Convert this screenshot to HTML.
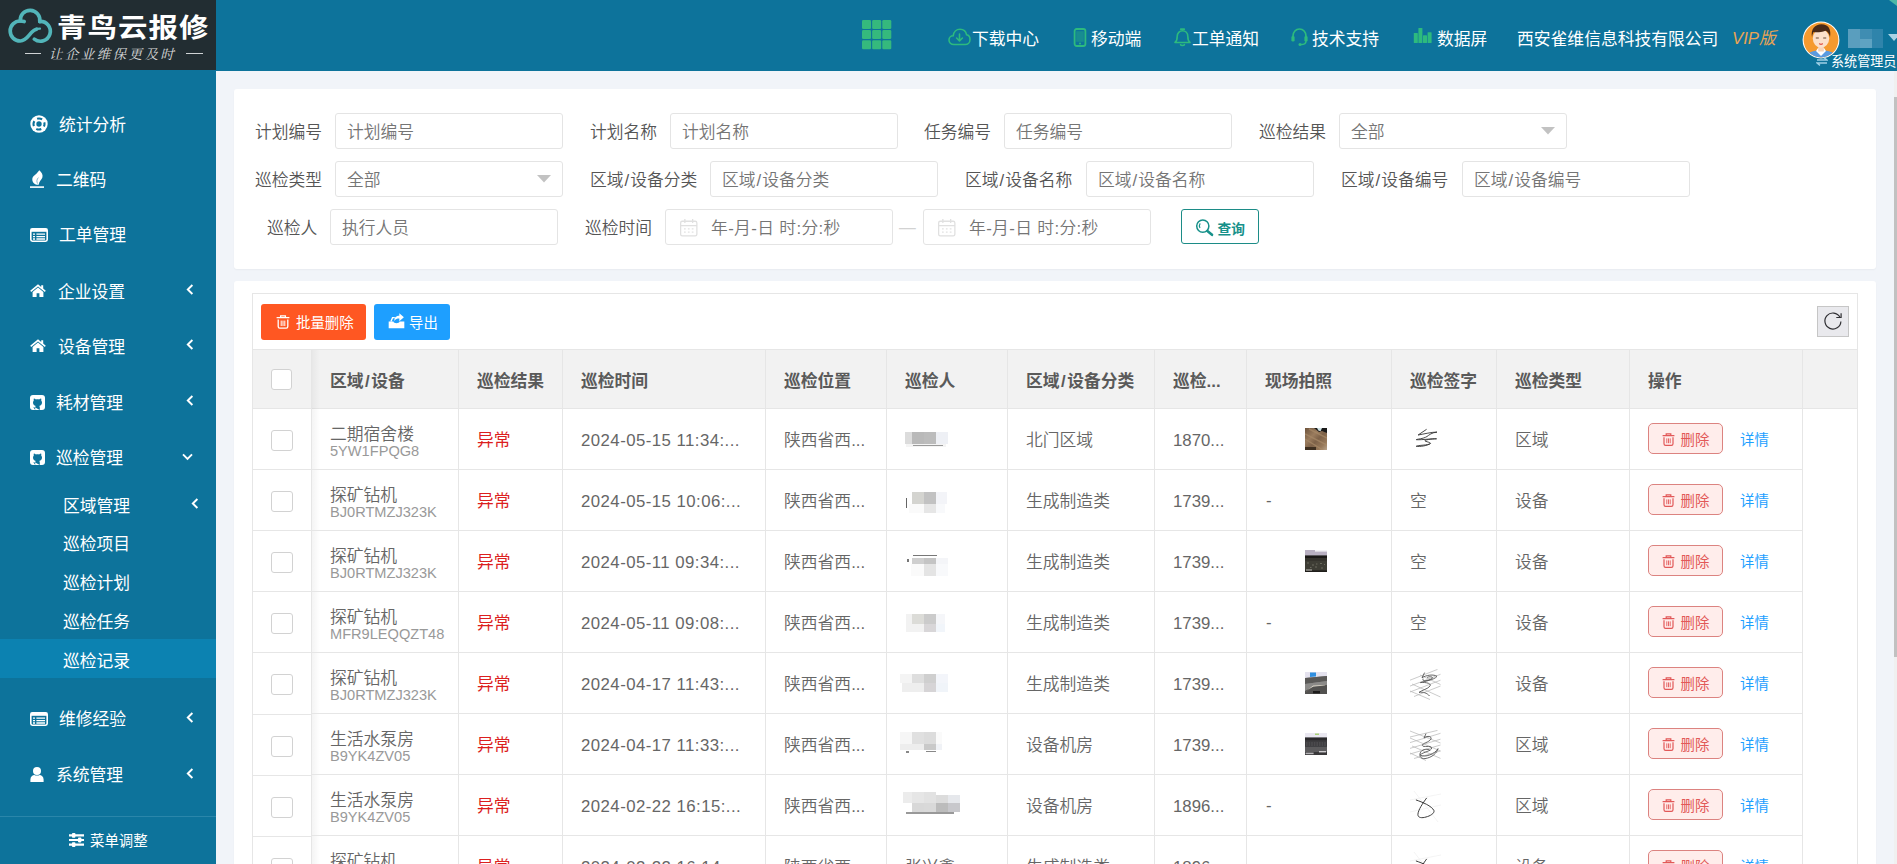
<!DOCTYPE html><html lang="zh-CN"><head><meta charset="utf-8"><title>青鸟云报修 - 巡检记录</title><style>
*{box-sizing:border-box;margin:0;padding:0}
html,body{width:1897px;height:864px;overflow:hidden;background:#f1f4f9;font-family:"Liberation Sans","Noto Sans CJK SC",sans-serif;font-size:16.8px;color:#666}
.a{position:absolute;white-space:nowrap}
.t{position:absolute;white-space:nowrap;line-height:24px;height:24px}
#hdr{left:0;top:0;width:1897px;height:71px;background:#0d739b}
.mi{color:#fff;font-size:16.8px;font-weight:400}
.nav{color:#fff;font-size:16.8px;font-weight:400}
.card{background:#fff;border-radius:3px;box-shadow:0 1px 2px rgba(0,0,0,.04)}
.lb{color:#555;font-size:16.8px;font-weight:350}
.inp{height:36px;border:1px solid #e4e4e4;border-radius:3px;background:#fff;color:#757575;font-size:16.8px;line-height:37px;padding-left:11px;font-weight:350;overflow:hidden}
.th{color:#5a5a5a;font-weight:700;font-size:16.8px}
.td{color:#666;font-size:16.8px;font-weight:350}
.code{color:#999;font-size:14.6px;font-weight:400}
.vl{width:1px;background:#e6e6e6}
.hl{height:1px;background:#e6e6e6}
.cb{width:22px;height:22px;border:1px solid #d2d2d2;border-radius:3px;background:#fff}
.del{width:75px;height:31px;border:1px solid #dc8380;border-radius:5px;background:#ffedeb;color:#e25858;font-size:14.4px}
.lnk{color:#1e9fff;font-size:14.4px}
</style></head><body>
<div id="hdr" class="a" style="left:0px;top:0px;width:1897px;height:71px;background:#0d739b"></div>
<div class="a " style="left:0px;top:0px;width:216px;height:70px;background:#222d32"></div>
<svg class="a" style="left:0px;top:0px;" width="64" height="50" viewBox="0 0 64 50"><g fill="none" stroke="#52b5b9" stroke-width="3.7" stroke-linecap="round"><path d="M24.2 21.5 C23 21.1 22 21 20.2 21 A10 10 0 1 0 20.2 41 C26 41 28.5 35.5 32 32 C33.6 30.4 35 29.6 36.4 29.2"/><path d="M20.3 20.9 A9.8 9.8 0 1 1 39.75 21.6"/><path d="M39.8 21.4 A9.9 9.9 0 1 1 34.34 39.1"/></g><path d="M35 29.8 C36.6 29 38.2 28.7 40 28.7" fill="none" stroke="#52b5b9" stroke-width="2.2" stroke-linecap="round"/></svg>
<div class="t " style="left:57px;top:9px;color:#fff;font-size:29.5px;font-weight:700;letter-spacing:1px;line-height:36px;height:36px;transform:scaleY(.9);transform-origin:50% 80%">青鸟云报修</div>
<div class="t " style="left:49px;top:44.5px;color:#d8d8d8;font-family:&quot;Liberation Serif&quot;,&quot;Noto Serif CJK SC&quot;,serif;font-style:italic;font-size:13.5px;letter-spacing:2.4px;line-height:20px;height:20px">让企业维保更及时</div>
<div class="a " style="left:25px;top:53px;width:16px;height:1.4px;background:#cfd3d5"></div>
<div class="a " style="left:186px;top:53px;width:17px;height:1.4px;background:#cfd3d5"></div>
<svg class="a" style="left:862px;top:20px;" width="30" height="30" viewBox="0 0 30 30"><rect x="0" y="0" width="9" height="9" rx="1.3" fill="#35b97d"/><rect x="10.15" y="0" width="9" height="9" rx="1.3" fill="#35b97d"/><rect x="20.3" y="0" width="9" height="9" rx="1.3" fill="#35b97d"/><rect x="0" y="10.1" width="9" height="9" rx="1.3" fill="#35b97d"/><rect x="10.15" y="10.1" width="9" height="9" rx="1.3" fill="#35b97d"/><rect x="20.3" y="10.1" width="9" height="9" rx="1.3" fill="#35b97d"/><rect x="0" y="20.2" width="9" height="9" rx="1.3" fill="#35b97d"/><rect x="10.15" y="20.2" width="9" height="9" rx="1.3" fill="#35b97d"/><rect x="20.3" y="20.2" width="9" height="9" rx="1.3" fill="#35b97d"/></svg>
<svg class="a" style="left:948px;top:28px;" width="23" height="18" viewBox="0 0 23 18"><path d="M6 16.5 C2.8 16.5 1 14.3 1 12 C1 9.6 2.8 7.8 5.2 7.8 C5.6 4 8.4 1.3 12 1.3 C15.4 1.3 18 3.6 18.6 6.8 C20.8 7.2 22 9.2 22 11.4 C22 14.4 19.8 16.5 17.2 16.5 Z" fill="none" stroke="#2dba7e" stroke-width="1.6"/><path d="M11.5 6 V12.6 M8.6 10 L11.5 13 L14.4 10" fill="none" stroke="#2dba7e" stroke-width="1.6" stroke-linecap="round" stroke-linejoin="round"/></svg>
<div class="t nav" style="left:972px;top:27.5px;">下载中心</div>
<svg class="a" style="left:1073px;top:28px;" width="14" height="19" viewBox="0 0 14 19"><rect x="1.6" y="1" width="10.8" height="17" rx="2" fill="none" stroke="#2dba7e" stroke-width="1.8"/><rect x="3.2" y="3.2" width="7.6" height="10.6" fill="#2dba7e" opacity=".35"/><circle cx="7" cy="15.6" r="1" fill="#2dba7e"/></svg>
<div class="t nav" style="left:1091px;top:27.5px;">移动端</div>
<svg class="a" style="left:1173px;top:27px;" width="19" height="20" viewBox="0 0 19 20"><path d="M2 15.5 C4 14 4.2 11.5 4.2 9.5 C4.2 6 6.5 3.8 9.5 3.8 C12.5 3.8 14.8 6 14.8 9.5 C14.8 11.5 15 14 17 15.5 Z" fill="none" stroke="#2dba7e" stroke-width="1.6" stroke-linejoin="round"/><path d="M7.8 2.2 H11.2" stroke="#2dba7e" stroke-width="1.8" stroke-linecap="round"/><path d="M7.5 17.6 C8 18.8 11 18.8 11.5 17.6" fill="none" stroke="#2dba7e" stroke-width="1.5" stroke-linecap="round"/></svg>
<div class="t nav" style="left:1192px;top:27.5px;">工单通知</div>
<svg class="a" style="left:1290px;top:27px;" width="19" height="20" viewBox="0 0 19 20"><path d="M3 11 V9 C3 5 5.8 2 9.5 2 C13.2 2 16 5 16 9 V11" fill="none" stroke="#2dba7e" stroke-width="1.7"/><rect x="1.4" y="9" width="3.2" height="5.6" rx="1.4" fill="#2dba7e"/><rect x="14.4" y="9" width="3.2" height="5.6" rx="1.4" fill="#2dba7e"/><path d="M16 14 C16 16.6 13.5 17.6 11 17.6" fill="none" stroke="#2dba7e" stroke-width="1.5"/><circle cx="10" cy="17.6" r="1.5" fill="#2dba7e"/></svg>
<div class="t nav" style="left:1312px;top:27.5px;">技术支持</div>
<svg class="a" style="left:1413px;top:27px;" width="19" height="17" viewBox="0 0 19 17"><rect x="0.8" y="6" width="4" height="10" rx=".6" fill="#2dba7e"/><rect x="5.4" y="1" width="4" height="15" rx=".6" fill="#2dba7e"/><rect x="10" y="8.2" width="4" height="7.8" rx=".6" fill="#2dba7e"/><rect x="14.6" y="5.2" width="4" height="10.8" rx=".6" fill="#2dba7e"/></svg>
<div class="t nav" style="left:1437px;top:27.5px;">数据屏</div>
<div class="t nav" style="left:1517px;top:27.5px;">西安雀维信息科技有限公司</div>
<div class="t " style="left:1732px;top:27px;color:#e8a354;font-style:italic;font-size:16.8px;font-weight:400">VIP版</div>
<svg class="a" style="left:1802px;top:20.8px;" width="38" height="38" viewBox="0 0 38 38"><defs><clipPath id="av"><circle cx="19" cy="19" r="17.4"/></clipPath></defs><circle cx="19" cy="19" r="18.4" fill="#fff"/><g clip-path="url(#av)"><rect width="38" height="38" fill="#f59a2f"/><path d="M3 38 C4 31 11 29.5 19 29.5 C27 29.5 34 31 35 38 Z" fill="#5b9be0"/><path d="M14 30 L19 35 L24 30 L22 27 H16 Z" fill="#fff"/><rect x="16.2" y="24" width="5.6" height="6.5" fill="#f7d3b8"/><ellipse cx="19" cy="17.5" rx="8.2" ry="9.2" fill="#fbe0cb"/><path d="M10 16 C8.5 8 13 3.2 19.5 3.2 C26.5 3.2 29.5 8.5 28 16 C27 12.5 25.5 10.5 23.5 9.8 C19 11.5 13.5 11.5 11.5 11 C10.8 12.5 10.3 14 10 16 Z" fill="#4a2a18"/><path d="M13.8 17 H16.8 M21.2 17 H24.2" stroke="#6b4a36" stroke-width="1.1"/><path d="M17.2 22.6 C18.4 23.6 19.6 23.6 20.8 22.6" stroke="#e2574c" stroke-width="1.3" fill="none"/></g></svg>
<div class="a " style="left:1848px;top:29px;width:12px;height:19px;background:#5a9ebe"></div>
<div class="a " style="left:1860px;top:29px;width:12px;height:10px;background:#3f8db2"></div>
<div class="a " style="left:1860px;top:39px;width:12px;height:9px;background:#5fa3c2"></div>
<div class="a " style="left:1872px;top:29px;width:11px;height:19px;background:#2f84ab"></div>
<svg class="a" style="left:1888px;top:34px;" width="9" height="8" viewBox="0 0 9 8"><path d="M0 0 H12 L6 7 Z" fill="#a9d3e6"/></svg>
<svg class="a" style="left:1816px;top:57px;" width="12" height="9" viewBox="0 0 12 9"><path d="M1 3 H11 L8 0.6 M11 6 H1 L4 8.4" fill="none" stroke="#9fd0e6" stroke-width="1.4"/></svg>
<div class="t " style="left:1831px;top:52.8px;color:#fff;font-size:13.1px;font-weight:400;line-height:18px;height:18px">系统管理员</div>
<svg class="a" style="left:1889px;top:0px;" width="8" height="6" viewBox="0 0 8 6"><path d="M0 0 H8 V6 Z" fill="#4db6a6"/></svg>
<div class="a " style="left:0px;top:71px;width:216px;height:793px;background:#0d739b"></div>
<svg class="a" style="left:30px;top:115px;" width="18" height="18" viewBox="0 0 18 18"><circle cx="9" cy="9" r="8.7" fill="#fff"/><circle cx="9" cy="9" r="5.5" fill="none" stroke="#0d739b" stroke-width="2.1" stroke-dasharray="5.2 3.44" stroke-dashoffset="2.6"/><circle cx="9" cy="9" r="2.7" fill="#0d739b"/></svg>
<div class="t mi" style="left:59px;top:113.5px;">统计分析</div>
<svg class="a" style="left:30px;top:170px;" width="14" height="18" viewBox="0 0 14 18"><path d="M9.3 0.3 C11.8 2.4 13.3 5 12.3 7.8 C11.5 10 9 11.4 8.7 14.8 C5 15 2.2 12.6 2.3 9.2 C2.4 6.2 5.2 5 6.8 3.2 C7.6 2.3 8.6 1.4 9.3 0.3 Z" fill="#fff"/><path d="M8.4 7.6 C6.8 9.2 6.4 11.6 7.6 13.6" fill="none" stroke="#0d739b" stroke-width=".9" opacity=".55"/><rect x="0" y="16.3" width="14" height="1.6" fill="#fff"/></svg>
<div class="t mi" style="left:56px;top:168.5px;">二维码</div>
<svg class="a" style="left:30px;top:227.5px;" width="18" height="14" viewBox="0 0 18 14"><rect x="0.8" y="0.8" width="16.4" height="12.4" rx="1.6" fill="none" stroke="#fff" stroke-width="1.6"/><rect x="0.8" y="0.8" width="16.4" height="3" fill="#fff"/><path d="M3 6.2 H5 M3 8.6 H5 M3 11 H5" stroke="#fff" stroke-width="1.3"/><path d="M6.4 6.2 H15 M6.4 8.6 H15 M6.4 11 H15" stroke="#fff" stroke-width="1.3"/></svg>
<div class="t mi" style="left:59px;top:224px;">工单管理</div>
<svg class="a" style="left:30px;top:284px;" width="16" height="13" viewBox="0 0 16 13"><path d="M8 0.2 L0.2 6.8 L1.2 8 L8 2.4 L14.8 8 L15.8 6.8 L13.2 4.6 V1.2 H11.2 V2.9 Z" fill="#fff"/><path d="M8 3.6 L2.6 8 V13 H6.6 V9.2 H9.4 V13 H13.4 V8 Z" fill="#fff"/></svg>
<div class="t mi" style="left:58px;top:280.5px;">企业设置</div>
<svg class="a" style="left:185.5px;top:284.3px;" width="8" height="11" viewBox="0 0 8 11"><path d="M6.4 1 L1.8 5.5 L6.4 10" fill="none" stroke="#fff" stroke-width="1.9"/></svg>
<svg class="a" style="left:30px;top:339px;" width="16" height="13" viewBox="0 0 16 13"><path d="M8 0.2 L0.2 6.8 L1.2 8 L8 2.4 L14.8 8 L15.8 6.8 L13.2 4.6 V1.2 H11.2 V2.9 Z" fill="#fff"/><path d="M8 3.6 L2.6 8 V13 H6.6 V9.2 H9.4 V13 H13.4 V8 Z" fill="#fff"/></svg>
<div class="t mi" style="left:58px;top:335.5px;">设备管理</div>
<svg class="a" style="left:185.5px;top:339.3px;" width="8" height="11" viewBox="0 0 8 11"><path d="M6.4 1 L1.8 5.5 L6.4 10" fill="none" stroke="#fff" stroke-width="1.9"/></svg>
<svg class="a" style="left:30px;top:394.5px;" width="15" height="15" viewBox="0 0 15 15"><rect x="0" y="0" width="15" height="15" rx="3" fill="#fff"/><path d="M5.2 15 V12.4 C3.6 12.8 3 11.6 2.6 11 M5.2 12.4 C5.2 11.6 5.4 11.2 5.8 10.9 C4 10.6 3 9.6 3 7.6 C3 6.8 3.3 6.1 3.8 5.6 C3.6 5 3.6 4.2 3.9 3.6 C4.6 3.6 5.3 4 5.9 4.5 C6.9 4.2 8.1 4.2 9.1 4.5 C9.7 4 10.4 3.6 11.1 3.6 C11.4 4.2 11.4 5 11.2 5.6 C11.7 6.1 12 6.8 12 7.6 C12 9.6 11 10.6 9.2 10.9 C9.6 11.2 9.8 11.7 9.8 12.4 V15 Z" fill="#0d739b"/></svg>
<div class="t mi" style="left:56px;top:391.5px;">耗材管理</div>
<svg class="a" style="left:185.5px;top:395.3px;" width="8" height="11" viewBox="0 0 8 11"><path d="M6.4 1 L1.8 5.5 L6.4 10" fill="none" stroke="#fff" stroke-width="1.9"/></svg>
<svg class="a" style="left:30px;top:449.5px;" width="15" height="15" viewBox="0 0 15 15"><rect x="0" y="0" width="15" height="15" rx="3" fill="#fff"/><path d="M5.2 15 V12.4 C3.6 12.8 3 11.6 2.6 11 M5.2 12.4 C5.2 11.6 5.4 11.2 5.8 10.9 C4 10.6 3 9.6 3 7.6 C3 6.8 3.3 6.1 3.8 5.6 C3.6 5 3.6 4.2 3.9 3.6 C4.6 3.6 5.3 4 5.9 4.5 C6.9 4.2 8.1 4.2 9.1 4.5 C9.7 4 10.4 3.6 11.1 3.6 C11.4 4.2 11.4 5 11.2 5.6 C11.7 6.1 12 6.8 12 7.6 C12 9.6 11 10.6 9.2 10.9 C9.6 11.2 9.8 11.7 9.8 12.4 V15 Z" fill="#0d739b"/></svg>
<div class="t mi" style="left:56px;top:446.5px;">巡检管理</div>
<svg class="a" style="left:181.5px;top:452.5px;" width="11" height="8" viewBox="0 0 11 8"><path d="M1 1.4 L5.5 6 L10 1.4" fill="none" stroke="#fff" stroke-width="1.9"/></svg>
<div class="a " style="left:0px;top:639px;width:216px;height:39px;background:#0c82b1"></div>
<div class="t mi" style="left:63px;top:494.5px;">区域管理</div>
<svg class="a" style="left:191px;top:498px;" width="8" height="11" viewBox="0 0 8 11"><path d="M6.4 1 L1.8 5.5 L6.4 10" fill="none" stroke="#fff" stroke-width="1.9"/></svg>
<div class="t mi" style="left:63px;top:533px;">巡检项目</div>
<div class="t mi" style="left:63px;top:571.5px;">巡检计划</div>
<div class="t mi" style="left:63px;top:610.5px;">巡检任务</div>
<div class="t mi" style="left:63px;top:649.5px;">巡检记录</div>
<svg class="a" style="left:30px;top:712px;" width="18" height="14" viewBox="0 0 18 14"><rect x="0.8" y="0.8" width="16.4" height="12.4" rx="1.6" fill="none" stroke="#fff" stroke-width="1.6"/><rect x="0.8" y="0.8" width="16.4" height="3" fill="#fff"/><path d="M3 6.2 H5 M3 8.6 H5 M3 11 H5" stroke="#fff" stroke-width="1.3"/><path d="M6.4 6.2 H15 M6.4 8.6 H15 M6.4 11 H15" stroke="#fff" stroke-width="1.3"/></svg>
<div class="t mi" style="left:59px;top:707.5px;">维修经验</div>
<svg class="a" style="left:185.5px;top:712.3px;" width="8" height="11" viewBox="0 0 8 11"><path d="M6.4 1 L1.8 5.5 L6.4 10" fill="none" stroke="#fff" stroke-width="1.9"/></svg>
<svg class="a" style="left:30px;top:767px;" width="14" height="15" viewBox="0 0 14 15"><circle cx="7" cy="4" r="4" fill="#fff"/><path d="M0.4 15 V12.6 C0.4 9.6 2.6 8 4.4 8 C5.2 8.8 8.8 8.8 9.6 8 C11.4 8 13.6 9.6 13.6 12.6 V15 Z" fill="#fff"/></svg>
<div class="t mi" style="left:56px;top:763.5px;">系统管理</div>
<svg class="a" style="left:185.5px;top:768.3px;" width="8" height="11" viewBox="0 0 8 11"><path d="M6.4 1 L1.8 5.5 L6.4 10" fill="none" stroke="#fff" stroke-width="1.9"/></svg>
<div class="a " style="left:0px;top:816px;width:216px;height:1px;background:#2a86aa"></div>
<svg class="a" style="left:69px;top:833px;" width="15" height="14" viewBox="0 0 15 14"><path d="M0 2.4 H15 M0 7 H15 M0 11.6 H15" stroke="#fff" stroke-width="2.1"/><rect x="3" y="0" width="3.4" height="4.8" rx=".8" fill="#fff"/><rect x="9" y="4.6" width="3.4" height="4.8" rx=".8" fill="#fff"/><rect x="3" y="9.2" width="3.4" height="4.8" rx=".8" fill="#fff"/></svg>
<div class="t " style="left:90px;top:828.5px;color:#fff;font-size:14.4px;font-weight:400">菜单调整</div>
<div class="a card" style="left:234px;top:89px;width:1642px;height:180px;"></div>
<div class="t lb" style="left:255px;top:120.5px;">计划编号</div>
<div class="a inp" style="left:335px;top:113px;width:228px;">计划编号</div>
<div class="t lb" style="left:590px;top:120.5px;">计划名称</div>
<div class="a inp" style="left:670px;top:113px;width:228px;">计划名称</div>
<div class="t lb" style="left:924px;top:120.5px;">任务编号</div>
<div class="a inp" style="left:1004px;top:113px;width:228px;">任务编号</div>
<div class="t lb" style="left:1259px;top:120.5px;">巡检结果</div>
<div class="a inp" style="left:1339px;top:113px;width:228px;">全部</div>
<svg class="a" style="left:1541px;top:127px;" width="14" height="8" viewBox="0 0 14 8"><path d="M0 0 H14 L7 7.4 Z" fill="#c2c2c2"/></svg>
<div class="t lb" style="left:255px;top:168.5px;">巡检类型</div>
<div class="a inp" style="left:335px;top:161px;width:228px;">全部</div>
<svg class="a" style="left:537px;top:175px;" width="14" height="8" viewBox="0 0 14 8"><path d="M0 0 H14 L7 7.4 Z" fill="#c2c2c2"/></svg>
<div class="t lb" style="left:590px;top:168.5px;">区域<span style="margin:0 1px">/</span>设备分类</div>
<div class="a inp" style="left:710px;top:161px;width:228px;">区域<span style="margin:0 1px">/</span>设备分类</div>
<div class="t lb" style="left:965px;top:168.5px;">区域<span style="margin:0 1px">/</span>设备名称</div>
<div class="a inp" style="left:1086px;top:161px;width:228px;">区域<span style="margin:0 1px">/</span>设备名称</div>
<div class="t lb" style="left:1341px;top:168.5px;">区域<span style="margin:0 1px">/</span>设备编号</div>
<div class="a inp" style="left:1462px;top:161px;width:228px;">区域<span style="margin:0 1px">/</span>设备编号</div>
<div class="t lb" style="left:267px;top:216.5px;">巡检人</div>
<div class="a inp" style="left:330px;top:209px;width:228px;">执行人员</div>
<div class="t lb" style="left:585px;top:216.5px;">巡检时间</div>
<div class="a inp" style="left:665px;top:209px;width:228px;padding-left:45px;letter-spacing:.35px">年-月-日 时:分:秒</div>
<svg class="a" style="left:678.5px;top:217.5px;" width="19.5" height="19.5" viewBox="0 0 18 18"><rect x="1.5" y="3" width="15" height="13.5" rx="1.5" fill="none" stroke="#e0e0e0" stroke-width="1.2"/><path d="M1.5 7 H16.5 M5.4 1 V4.6 M12.6 1 V4.6" stroke="#e0e0e0" stroke-width="1.2"/><path d="M4.6 10 H6.2 M8.2 10 H9.8 M11.8 10 H13.4 M4.6 13 H6.2 M8.2 13 H9.8 M11.8 13 H13.4" stroke="#e2e2e2" stroke-width="1.2"/></svg>
<div class="t " style="left:899px;top:215.5px;color:#d2d2d2;font-size:16.8px">—</div>
<div class="a inp" style="left:923px;top:209px;width:228px;padding-left:45px;letter-spacing:.35px">年-月-日 时:分:秒</div>
<svg class="a" style="left:936.5px;top:217.5px;" width="19.5" height="19.5" viewBox="0 0 18 18"><rect x="1.5" y="3" width="15" height="13.5" rx="1.5" fill="none" stroke="#e0e0e0" stroke-width="1.2"/><path d="M1.5 7 H16.5 M5.4 1 V4.6 M12.6 1 V4.6" stroke="#e0e0e0" stroke-width="1.2"/><path d="M4.6 10 H6.2 M8.2 10 H9.8 M11.8 10 H13.4 M4.6 13 H6.2 M8.2 13 H9.8 M11.8 13 H13.4" stroke="#e2e2e2" stroke-width="1.2"/></svg>
<div class="a " style="left:1181px;top:209px;width:78px;height:35px;border:1px solid #1c8c87;border-radius:3px;background:#fff"></div>
<svg class="a" style="left:1194px;top:217px;" width="20" height="20" viewBox="0 0 20 20"><circle cx="8.8" cy="9.1" r="6.1" fill="none" stroke="#17918a" stroke-width="1.5"/><path d="M13.4 14 L18 17.8" stroke="#17918a" stroke-width="2.6" stroke-linecap="round"/><path d="M6.2 6.4 C5.2 7.8 5.2 9.6 6 11" stroke="#17918a" stroke-width="1.1" fill="none"/></svg>
<div class="t " style="left:1217.5px;top:218px;color:#17918a;font-size:13.7px;font-weight:700">查询</div>
<div class="a card" style="left:234px;top:281px;width:1642px;height:600px;"></div>
<div class="a " style="left:252px;top:293px;width:1606px;height:580px;border:1px solid #e6e6e6;background:#fff"></div>
<div class="a " style="left:261px;top:304px;width:105px;height:36px;background:#ff5722;border-radius:3px"></div>
<svg class="a" style="left:276px;top:314.5px;" width="14" height="14" viewBox="0 0 14 14"><path d="M0.6 2.6 H13.4 M4.6 2.4 V0.8 H9.4 V2.4" fill="none" stroke="#fff" stroke-width="1.3"/><path d="M2.2 4.4 V11.6 C2.2 12.6 2.8 13.2 3.8 13.2 H10.2 C11.2 13.2 11.8 12.6 11.8 11.6 V4.4" fill="none" stroke="#fff" stroke-width="1.3"/><path d="M5.2 5.6 V11 M7 5.6 V11 M8.8 5.6 V11" stroke="#fff" stroke-width="1"/></svg>
<div class="t " style="left:296px;top:310.5px;color:#fff;font-size:14.4px;font-weight:400">批量删除</div>
<div class="a " style="left:374px;top:304px;width:76px;height:36px;background:#1e9fff;border-radius:3px"></div>
<svg class="a" style="left:388px;top:312px;" width="17" height="17" viewBox="0 0 15 15"><path d="M0.6 8.4 H4.8 C5 10.4 10 10.4 10.2 8.4 H14.4 V14.4 H0.6 Z" fill="#fff"/><path d="M2.6 8.4 L4 5 H6" fill="none" stroke="#fff" stroke-width="1.2"/><path d="M5.6 8 C5.6 4.6 7.4 3.4 10 3.4 V1 L14 4.6 L10 8.2 V5.8 C8 5.8 6.6 6.2 5.6 8 Z" fill="#fff"/></svg>
<div class="t " style="left:409px;top:310.5px;color:#fff;font-size:14.4px;font-weight:400">导出</div>
<div class="a " style="left:1817px;top:306px;width:32px;height:31px;background:#e9e9ed;border:1px solid #c6c6c6"></div>
<svg class="a" style="left:1817px;top:306px;" width="32" height="31" viewBox="0 0 32 31"><path d="M22.96 11.24 A8 8 0 1 0 23.89 15.42" fill="none" stroke="#2f2f33" stroke-width="1.2"/><path d="M24.1 7.3 V11.5 H19.3" fill="none" stroke="#2f2f33" stroke-width="1.2"/></svg>
<div class="a " style="left:253px;top:350px;width:1604px;height:58px;background:#f2f2f2"></div>
<div class="a hl" style="left:253px;top:349px;width:1604px;height:1px;"></div>
<div class="a hl" style="left:253px;top:408px;width:1604px;height:1px;"></div>
<div class="a " style="left:312px;top:350px;width:8px;height:523px;background:linear-gradient(to right,rgba(0,0,0,.045),rgba(0,0,0,0))"></div>
<div class="a vl" style="left:311px;top:350px;width:1px;height:523px;"></div>
<div class="a vl" style="left:458px;top:350px;width:1px;height:523px;"></div>
<div class="a vl" style="left:562px;top:350px;width:1px;height:523px;"></div>
<div class="a vl" style="left:765px;top:350px;width:1px;height:523px;"></div>
<div class="a vl" style="left:886px;top:350px;width:1px;height:523px;"></div>
<div class="a vl" style="left:1007px;top:350px;width:1px;height:523px;"></div>
<div class="a vl" style="left:1154px;top:350px;width:1px;height:523px;"></div>
<div class="a vl" style="left:1246px;top:350px;width:1px;height:523px;"></div>
<div class="a vl" style="left:1391px;top:350px;width:1px;height:523px;"></div>
<div class="a vl" style="left:1496px;top:350px;width:1px;height:523px;"></div>
<div class="a vl" style="left:1629px;top:350px;width:1px;height:523px;"></div>
<div class="a vl" style="left:1802px;top:350px;width:1px;height:523px;"></div>
<div class="t th" style="left:330px;top:369.5px;">区域<span style="margin:0 1.5px">/</span>设备</div>
<div class="t th" style="left:477px;top:369.5px;">巡检结果</div>
<div class="t th" style="left:581px;top:369.5px;">巡检时间</div>
<div class="t th" style="left:784px;top:369.5px;">巡检位置</div>
<div class="t th" style="left:905px;top:369.5px;">巡检人</div>
<div class="t th" style="left:1026px;top:369.5px;">区域<span style="margin:0 1.5px">/</span>设备分类</div>
<div class="t th" style="left:1173px;top:369.5px;">巡检...</div>
<div class="t th" style="left:1265px;top:369.5px;">现场拍照</div>
<div class="t th" style="left:1410px;top:369.5px;">巡检签字</div>
<div class="t th" style="left:1515px;top:369.5px;">巡检类型</div>
<div class="t th" style="left:1648px;top:369.5px;">操作</div>
<div class="a cb" style="left:271px;top:369px;width:21px;height:21px;"></div>
<div class="a hl" style="left:312px;top:469px;width:1491px;height:1px;"></div>
<div class="a hl" style="left:253px;top:469px;width:58px;height:1px;"></div>
<div class="a cb" style="left:271px;top:430px;width:22px;height:21px;height:21px"></div>
<div class="t td" style="left:330px;top:422.7px;">二期宿舍楼</div>
<div class="t code" style="left:330px;top:438.5px;">5YW1FPQG8</div>
<div class="t td" style="left:477px;top:428.5px;color:#dc1f1f;font-weight:400">异常</div>
<div class="t td" style="left:581px;top:428.5px;letter-spacing:.45px">2024-05-15 11:34:...</div>
<div class="t td" style="left:784px;top:428.5px;">陕西省西...</div>
<div class="a " style="left:905px;top:431.5px;width:7px;height:12px;background:#dcdcdc"></div>
<div class="a " style="left:912px;top:431.5px;width:12px;height:12px;background:#b9b9b9"></div>
<div class="a " style="left:924px;top:431.5px;width:12px;height:12px;background:#bcbcbc"></div>
<div class="a " style="left:936px;top:431.5px;width:12px;height:12px;background:#eef0f5"></div>
<div class="a " style="left:906px;top:443.5px;width:40px;height:3px;background:#f4f4f4"></div>
<div class="a " style="left:913px;top:444.5px;width:30px;height:1.5px;background:#9a9a9a"></div>
<div class="t td" style="left:1026px;top:428.5px;">北门区域</div>
<div class="t td" style="left:1173px;top:428.5px;">1870...</div>
<svg class="a" style="left:1305px;top:427.5px;" width="22" height="22" viewBox="0 0 22 22"><defs><linearGradient id="wd" x1="0" y1="0" x2="1" y2="1"><stop offset="0" stop-color="#6e543d"/><stop offset=".35" stop-color="#9a7c5e"/><stop offset=".55" stop-color="#7d6148"/><stop offset=".8" stop-color="#97795a"/><stop offset="1" stop-color="#b9a48c"/></linearGradient></defs><rect width="22" height="22" fill="url(#wd)"/><path d="M0 6 L22 17 M0 11 L18 22 M4 1 L22 10" stroke="#a88a68" stroke-width="1.4" opacity=".7"/><path d="M9 0 H22 V5 L17 3 L14 4 Z" fill="#1a1a1a"/><path d="M12 0 H17 L15.5 3.2 L13.4 2.6 Z" fill="#cfe2e4"/><rect x="0" y="19" width="11" height="3" fill="#3e2f20"/></svg>
<svg class="a" style="left:1410px;top:425px;" width="31" height="31" viewBox="0 0 31 31"><path d="M16.6 4.3 L8.1 10 C14 9 22 7 27 7.1 C22 7.5 19 10 17 11.5 C13 14 7 14 6.2 14.7 C12 15 22 13.5 26.6 13.8 C20 14 14 15 15 16 C17 17 21 17.5 20.4 18.5 C18 20.5 8 20 6.2 21.3 C10 22 18 20.5 20.4 18.5" fill="none" stroke="#333" stroke-width=".9"/></svg>
<div class="t td" style="left:1515px;top:428.5px;">区域</div>
<div class="a del" style="left:1648px;top:422.5px;width:75px;height:31px;"></div>
<svg class="a" style="left:1662.4px;top:432.5px;" width="13" height="13" viewBox="0 0 13 13"><path d="M0.6 2.6 H12.4 M4.2 2.4 V0.9 H8.8 V2.4" fill="none" stroke="#e25858" stroke-width="1.2"/><path d="M2 4.2 V10.8 C2 11.8 2.6 12.4 3.6 12.4 H9.4 C10.4 12.4 11 11.8 11 10.8 V4.2" fill="none" stroke="#e25858" stroke-width="1.2"/><path d="M4.8 5.4 V10.2 M6.5 5.4 V10.2 M8.2 5.4 V10.2" stroke="#e25858" stroke-width=".9"/></svg>
<div class="t " style="left:1680.5px;top:428px;color:#e25858;font-size:14.4px">删除</div>
<div class="t lnk" style="left:1740px;top:428px;">详情</div>
<div class="a hl" style="left:312px;top:530px;width:1491px;height:1px;"></div>
<div class="a hl" style="left:253px;top:530px;width:58px;height:1px;"></div>
<div class="a cb" style="left:271px;top:491px;width:22px;height:21px;height:21px"></div>
<div class="t td" style="left:330px;top:483.7px;">探矿钻机</div>
<div class="t code" style="left:330px;top:499.5px;">BJ0RTMZJ323K</div>
<div class="t td" style="left:477px;top:489.5px;color:#dc1f1f;font-weight:400">异常</div>
<div class="t td" style="left:581px;top:489.5px;letter-spacing:.45px">2024-05-15 10:06:...</div>
<div class="t td" style="left:784px;top:489.5px;">陕西省西...</div>
<div class="a " style="left:912px;top:491.5px;width:12px;height:12px;background:#d4d4d0"></div>
<div class="a " style="left:924px;top:491.5px;width:12px;height:12px;background:#c2c2c2"></div>
<div class="a " style="left:936px;top:491.5px;width:11px;height:12px;background:#f3f4f8"></div>
<div class="a " style="left:909px;top:503.5px;width:15px;height:9px;background:#fafafa"></div>
<div class="a " style="left:924px;top:503.5px;width:12px;height:9px;background:#e6e6e6"></div>
<div class="a " style="left:936px;top:503.5px;width:9px;height:9px;background:#f8f9fb"></div>
<div class="a " style="left:905.5px;top:497.5px;width:1.6px;height:10px;background:#666"></div>
<div class="t td" style="left:1026px;top:489.5px;">生成制造类</div>
<div class="t td" style="left:1173px;top:489.5px;">1739...</div>
<div class="t td" style="left:1266px;top:488.5px;">-</div>
<div class="t td" style="left:1410px;top:489.5px;">空</div>
<div class="t td" style="left:1515px;top:489.5px;">设备</div>
<div class="a del" style="left:1648px;top:483.5px;width:75px;height:31px;"></div>
<svg class="a" style="left:1662.4px;top:493.5px;" width="13" height="13" viewBox="0 0 13 13"><path d="M0.6 2.6 H12.4 M4.2 2.4 V0.9 H8.8 V2.4" fill="none" stroke="#e25858" stroke-width="1.2"/><path d="M2 4.2 V10.8 C2 11.8 2.6 12.4 3.6 12.4 H9.4 C10.4 12.4 11 11.8 11 10.8 V4.2" fill="none" stroke="#e25858" stroke-width="1.2"/><path d="M4.8 5.4 V10.2 M6.5 5.4 V10.2 M8.2 5.4 V10.2" stroke="#e25858" stroke-width=".9"/></svg>
<div class="t " style="left:1680.5px;top:489px;color:#e25858;font-size:14.4px">删除</div>
<div class="t lnk" style="left:1740px;top:489px;">详情</div>
<div class="a hl" style="left:312px;top:591px;width:1491px;height:1px;"></div>
<div class="a hl" style="left:253px;top:591px;width:58px;height:1px;"></div>
<div class="a cb" style="left:271px;top:552px;width:22px;height:21px;height:21px"></div>
<div class="t td" style="left:330px;top:544.7px;">探矿钻机</div>
<div class="t code" style="left:330px;top:560.5px;">BJ0RTMZJ323K</div>
<div class="t td" style="left:477px;top:550.5px;color:#dc1f1f;font-weight:400">异常</div>
<div class="t td" style="left:581px;top:550.5px;letter-spacing:.45px">2024-05-11 09:34:...</div>
<div class="t td" style="left:784px;top:550.5px;">陕西省西...</div>
<div class="a " style="left:912px;top:557.5px;width:12px;height:6px;background:#cfcfcf"></div>
<div class="a " style="left:924px;top:557.5px;width:12px;height:6px;background:#c4c4c4"></div>
<div class="a " style="left:936px;top:557.5px;width:12px;height:6px;background:#f4f5f8"></div>
<div class="a " style="left:911px;top:563.5px;width:13px;height:12px;background:#fafafa"></div>
<div class="a " style="left:924px;top:563.5px;width:12px;height:12px;background:#e4e4e4"></div>
<div class="a " style="left:936px;top:563.5px;width:12px;height:12px;background:#f8f9fb"></div>
<div class="a " style="left:913px;top:555px;width:24px;height:1.4px;background:#777"></div>
<div class="a " style="left:907px;top:558.5px;width:2px;height:3px;background:#777"></div>
<div class="t td" style="left:1026px;top:550.5px;">生成制造类</div>
<div class="t td" style="left:1173px;top:550.5px;">1739...</div>
<svg class="a" style="left:1305px;top:549.5px;" width="22" height="22" viewBox="0 0 22 22"><rect width="22" height="22" fill="#3e3d35"/><rect width="22" height="5.6" fill="#b9b0c2"/><rect x="10" width="12" height="1.6" fill="#f4f2f6"/><rect y="5.6" width="22" height="2.4" fill="#1b1917"/><rect y="8" width="22" height="3" fill="#35332d"/><path d="M2 13 H4 M7 15 H9 M11 14 H12.5 M15 13.5 H17 M10 17 H12 M5 17.5 H6.5 M16 18 H18 M19 14.5 H20" stroke="#6a6a5e" stroke-width="1.2"/><rect y="20.4" width="22" height="1.6" fill="#1f1d1a"/><rect x="1" y="19.2" width="6" height="1.6" fill="#8d8a86"/></svg>
<div class="t td" style="left:1410px;top:550.5px;">空</div>
<div class="t td" style="left:1515px;top:550.5px;">设备</div>
<div class="a del" style="left:1648px;top:544.5px;width:75px;height:31px;"></div>
<svg class="a" style="left:1662.4px;top:554.5px;" width="13" height="13" viewBox="0 0 13 13"><path d="M0.6 2.6 H12.4 M4.2 2.4 V0.9 H8.8 V2.4" fill="none" stroke="#e25858" stroke-width="1.2"/><path d="M2 4.2 V10.8 C2 11.8 2.6 12.4 3.6 12.4 H9.4 C10.4 12.4 11 11.8 11 10.8 V4.2" fill="none" stroke="#e25858" stroke-width="1.2"/><path d="M4.8 5.4 V10.2 M6.5 5.4 V10.2 M8.2 5.4 V10.2" stroke="#e25858" stroke-width=".9"/></svg>
<div class="t " style="left:1680.5px;top:550px;color:#e25858;font-size:14.4px">删除</div>
<div class="t lnk" style="left:1740px;top:550px;">详情</div>
<div class="a hl" style="left:312px;top:652px;width:1491px;height:1px;"></div>
<div class="a hl" style="left:253px;top:652px;width:58px;height:1px;"></div>
<div class="a cb" style="left:271px;top:613px;width:22px;height:21px;height:21px"></div>
<div class="t td" style="left:330px;top:605.7px;">探矿钻机</div>
<div class="t code" style="left:330px;top:621.5px;">MFR9LEQQZT48</div>
<div class="t td" style="left:477px;top:611.5px;color:#dc1f1f;font-weight:400">异常</div>
<div class="t td" style="left:581px;top:611.5px;letter-spacing:.45px">2024-05-11 09:08:...</div>
<div class="t td" style="left:784px;top:611.5px;">陕西省西...</div>
<div class="a " style="left:906px;top:613.5px;width:6px;height:10px;background:#f2f2f2"></div>
<div class="a " style="left:912px;top:613.5px;width:12px;height:10px;background:#dcdcd8"></div>
<div class="a " style="left:924px;top:613.5px;width:12px;height:10px;background:#cbcbcb"></div>
<div class="a " style="left:936px;top:613.5px;width:9px;height:10px;background:#f5f6f9"></div>
<div class="a " style="left:906px;top:623.5px;width:18px;height:8px;background:#f2f2f2"></div>
<div class="a " style="left:924px;top:623.5px;width:12px;height:8px;background:#d8d6d8"></div>
<div class="a " style="left:936px;top:623.5px;width:9px;height:8px;background:#f1f5fa"></div>
<div class="t td" style="left:1026px;top:611.5px;">生成制造类</div>
<div class="t td" style="left:1173px;top:611.5px;">1739...</div>
<div class="t td" style="left:1266px;top:610.5px;">-</div>
<div class="t td" style="left:1410px;top:611.5px;">空</div>
<div class="t td" style="left:1515px;top:611.5px;">设备</div>
<div class="a del" style="left:1648px;top:605.5px;width:75px;height:31px;"></div>
<svg class="a" style="left:1662.4px;top:615.5px;" width="13" height="13" viewBox="0 0 13 13"><path d="M0.6 2.6 H12.4 M4.2 2.4 V0.9 H8.8 V2.4" fill="none" stroke="#e25858" stroke-width="1.2"/><path d="M2 4.2 V10.8 C2 11.8 2.6 12.4 3.6 12.4 H9.4 C10.4 12.4 11 11.8 11 10.8 V4.2" fill="none" stroke="#e25858" stroke-width="1.2"/><path d="M4.8 5.4 V10.2 M6.5 5.4 V10.2 M8.2 5.4 V10.2" stroke="#e25858" stroke-width=".9"/></svg>
<div class="t " style="left:1680.5px;top:611px;color:#e25858;font-size:14.4px">删除</div>
<div class="t lnk" style="left:1740px;top:611px;">详情</div>
<div class="a hl" style="left:312px;top:713px;width:1491px;height:1px;"></div>
<div class="a hl" style="left:253px;top:714px;width:58px;height:1px;"></div>
<div class="a cb" style="left:271px;top:674px;width:22px;height:21px;height:21px"></div>
<div class="t td" style="left:330px;top:666.7px;">探矿钻机</div>
<div class="t code" style="left:330px;top:682.5px;">BJ0RTMZJ323K</div>
<div class="t td" style="left:477px;top:672.5px;color:#dc1f1f;font-weight:400">异常</div>
<div class="t td" style="left:581px;top:672.5px;letter-spacing:.45px">2024-04-17 11:43:...</div>
<div class="t td" style="left:784px;top:672.5px;">陕西省西...</div>
<div class="a " style="left:900px;top:673.5px;width:12px;height:9px;background:#f4f4f4"></div>
<div class="a " style="left:912px;top:673.5px;width:12px;height:9px;background:#dedede"></div>
<div class="a " style="left:924px;top:673.5px;width:12px;height:9px;background:#cfcfcf"></div>
<div class="a " style="left:936px;top:673.5px;width:12px;height:9px;background:#f3f5fa"></div>
<div class="a " style="left:902px;top:682.5px;width:22px;height:9px;background:#eeeeee"></div>
<div class="a " style="left:924px;top:682.5px;width:12px;height:9px;background:#d6d4d6"></div>
<div class="a " style="left:936px;top:682.5px;width:12px;height:9px;background:#f0f4f9"></div>
<div class="t td" style="left:1026px;top:672.5px;">生成制造类</div>
<div class="t td" style="left:1173px;top:672.5px;">1739...</div>
<svg class="a" style="left:1305px;top:671.5px;" width="22" height="22" viewBox="0 0 22 22"><rect width="22" height="22" fill="#807f7e"/><path d="M0 0 H22 V4 L0 6 Z" fill="#e4e2ee"/><path d="M5 0.5 H11 V4.4 L5 5 Z" fill="#2f8fe0"/><path d="M0 6 L22 4 V9 L0 12 Z" fill="#5a5957"/><path d="M0 12 L22 9 V13 L8 15 L0 19 Z" fill="#8b8a88"/><path d="M1 20 L8 14 L20 13.4" fill="none" stroke="#d8d2c4" stroke-width="1"/><path d="M0 19 L8 15 L22 13 V22 H0 Z" fill="#4a4947" opacity=".85"/><rect x="8" y="19" width="7" height="2.4" fill="#1d1c1b"/></svg>
<svg class="a" style="left:1410px;top:669px;" width="31" height="31" viewBox="0 0 31 31"><path d="M0 11.2 L27.5 0.4 M0 17.1 L30.5 5.3 M0 23 L30.5 11.2 M4 27.5 L30.5 17 M2 15 L30.5 28 M0 22 L20 30.5 M10 6 L30.5 15.5" fill="none" stroke="#b4b4b4" stroke-width=".7"/><path d="M14.6 3.6 L12 8.8 C16 6 24 5 27 7.4 C24 11 14 12.4 10.4 13.6 C14 13 22 14 20 17 C18 20 12 21 9 23.4 C13 22.6 17 24 19.6 27 M13 9.6 C12 13 18 12 22 9.6 C24 8 20 7 17 8.4" fill="none" stroke="#555" stroke-width=".9"/></svg>
<div class="t td" style="left:1515px;top:672.5px;">设备</div>
<div class="a del" style="left:1648px;top:666.5px;width:75px;height:31px;"></div>
<svg class="a" style="left:1662.4px;top:676.5px;" width="13" height="13" viewBox="0 0 13 13"><path d="M0.6 2.6 H12.4 M4.2 2.4 V0.9 H8.8 V2.4" fill="none" stroke="#e25858" stroke-width="1.2"/><path d="M2 4.2 V10.8 C2 11.8 2.6 12.4 3.6 12.4 H9.4 C10.4 12.4 11 11.8 11 10.8 V4.2" fill="none" stroke="#e25858" stroke-width="1.2"/><path d="M4.8 5.4 V10.2 M6.5 5.4 V10.2 M8.2 5.4 V10.2" stroke="#e25858" stroke-width=".9"/></svg>
<div class="t " style="left:1680.5px;top:672px;color:#e25858;font-size:14.4px">删除</div>
<div class="t lnk" style="left:1740px;top:672px;">详情</div>
<div class="a hl" style="left:312px;top:774px;width:1491px;height:1px;"></div>
<div class="a hl" style="left:253px;top:775px;width:58px;height:1px;"></div>
<div class="a cb" style="left:271px;top:736px;width:22px;height:21px;height:21px"></div>
<div class="t td" style="left:330px;top:727.7px;">生活水泵房</div>
<div class="t code" style="left:330px;top:743.5px;">B9YK4ZV05</div>
<div class="t td" style="left:477px;top:733.5px;color:#dc1f1f;font-weight:400">异常</div>
<div class="t td" style="left:581px;top:733.5px;letter-spacing:.45px">2024-04-17 11:33:...</div>
<div class="t td" style="left:784px;top:733.5px;">陕西省西...</div>
<div class="a " style="left:900px;top:731.5px;width:12px;height:12px;background:#f6f6f6"></div>
<div class="a " style="left:912px;top:731.5px;width:12px;height:12px;background:#e0e0e0"></div>
<div class="a " style="left:924px;top:731.5px;width:12px;height:12px;background:#dcdcdc"></div>
<div class="a " style="left:936px;top:731.5px;width:6px;height:12px;background:#fafafa"></div>
<div class="a " style="left:900px;top:743.5px;width:24px;height:6px;background:#ededed"></div>
<div class="a " style="left:924px;top:743.5px;width:12px;height:6px;background:#c9c9c9"></div>
<div class="a " style="left:936px;top:743.5px;width:6px;height:6px;background:#f0f2f6"></div>
<div class="a " style="left:906px;top:750.5px;width:3px;height:2px;background:#888"></div>
<div class="a " style="left:926px;top:750.5px;width:10px;height:1.6px;background:#888"></div>
<div class="t td" style="left:1026px;top:733.5px;">设备机房</div>
<div class="t td" style="left:1173px;top:733.5px;">1739...</div>
<svg class="a" style="left:1305px;top:732.5px;" width="22" height="22" viewBox="0 0 22 22"><rect width="22" height="22" fill="#4b4a4c"/><rect width="22" height="4.6" fill="#e9e7f0"/><rect x="10" y="0.6" width="4" height="1.2" fill="#9acb5a"/><rect y="4.6" width="22" height="3" fill="#2a292b"/><rect y="7.6" width="22" height="6" fill="#3d3c3f"/><path d="M1 10 H21 M1 12 H21" stroke="#5d5c60" stroke-width=".9" stroke-dasharray="1.6 1"/><rect y="14" width="22" height="5" fill="#5c5b5d"/><rect y="19" width="22" height="3" fill="#39383a"/><rect x="0.6" y="19.6" width="8" height="1.6" fill="#b5b3b6"/><rect x="14" y="18" width="7" height="1.4" fill="#cfcdd0"/></svg>
<svg class="a" style="left:1410px;top:730px;" width="31" height="31" viewBox="0 0 31 31"><path d="M0 7 L27.5 0.4 M0 12.6 L30.5 3.3 M0 18.4 L30.5 9.2 M0 24 L30.5 15 M4 28.5 L30.5 21 M0 1 L30.5 13 M0 8 L30.5 21 M2 16 L30.5 28.4 M0 23 L16 30.5" fill="none" stroke="#b4b4b4" stroke-width=".7"/><path d="M16 3.6 L14 8 C17 5.4 22 6 21 9 C19 12.6 12 13 12.4 15.6 C13 17.6 21 15 21.6 18 C22 21 13 22 10 25 C15 28 25 24 28 18.6 C27 23 22 27.6 15 28.6 C10 29 8.6 25 11 21.6 C13 19 18 18.6 20 20.4" fill="none" stroke="#555" stroke-width=".9"/></svg>
<div class="t td" style="left:1515px;top:733.5px;">区域</div>
<div class="a del" style="left:1648px;top:727.5px;width:75px;height:31px;"></div>
<svg class="a" style="left:1662.4px;top:737.5px;" width="13" height="13" viewBox="0 0 13 13"><path d="M0.6 2.6 H12.4 M4.2 2.4 V0.9 H8.8 V2.4" fill="none" stroke="#e25858" stroke-width="1.2"/><path d="M2 4.2 V10.8 C2 11.8 2.6 12.4 3.6 12.4 H9.4 C10.4 12.4 11 11.8 11 10.8 V4.2" fill="none" stroke="#e25858" stroke-width="1.2"/><path d="M4.8 5.4 V10.2 M6.5 5.4 V10.2 M8.2 5.4 V10.2" stroke="#e25858" stroke-width=".9"/></svg>
<div class="t " style="left:1680.5px;top:733px;color:#e25858;font-size:14.4px">删除</div>
<div class="t lnk" style="left:1740px;top:733px;">详情</div>
<div class="a hl" style="left:312px;top:835px;width:1491px;height:1px;"></div>
<div class="a hl" style="left:253px;top:836px;width:58px;height:1px;"></div>
<div class="a cb" style="left:271px;top:797px;width:22px;height:21px;height:21px"></div>
<div class="t td" style="left:330px;top:788.7px;">生活水泵房</div>
<div class="t code" style="left:330px;top:804.5px;">B9YK4ZV05</div>
<div class="t td" style="left:477px;top:794.5px;color:#dc1f1f;font-weight:400">异常</div>
<div class="t td" style="left:581px;top:794.5px;letter-spacing:.45px">2024-02-22 16:15:...</div>
<div class="t td" style="left:784px;top:794.5px;">陕西省西...</div>
<div class="a " style="left:903px;top:791.5px;width:9px;height:11px;background:#ececec"></div>
<div class="a " style="left:912px;top:791.5px;width:12px;height:11px;background:#e6e6e6"></div>
<div class="a " style="left:924px;top:791.5px;width:12px;height:11px;background:#e2e2e2"></div>
<div class="a " style="left:936px;top:794.5px;width:12px;height:8px;background:#dcdcdc"></div>
<div class="a " style="left:948px;top:794.5px;width:12px;height:8px;background:#e6e8ec"></div>
<div class="a " style="left:912px;top:802.5px;width:12px;height:9px;background:#d8d8d8"></div>
<div class="a " style="left:924px;top:802.5px;width:12px;height:9px;background:#d9d9d9"></div>
<div class="a " style="left:936px;top:802.5px;width:12px;height:9px;background:#bcbcbc"></div>
<div class="a " style="left:948px;top:802.5px;width:12px;height:9px;background:#c8c8cc"></div>
<div class="a " style="left:906px;top:812px;width:48px;height:1.5px;background:#999"></div>
<div class="t td" style="left:1026px;top:794.5px;">设备机房</div>
<div class="t td" style="left:1173px;top:794.5px;">1896...</div>
<div class="t td" style="left:1266px;top:793.5px;">-</div>
<svg class="a" style="left:1410px;top:791px;" width="31" height="31" viewBox="0 0 31 31"><path d="M0 9 L31 3 M0 21 L31 14 M4 0 L28 31" fill="none" stroke="#efefef" stroke-width=".7"/><path d="M16.7 6.9 C13 12 8 19 7.9 23.6 C8 27 12 27.2 16 26 C20 25 24.5 22.5 24 19.7 C22 15 12 11 5.9 8.9" fill="none" stroke="#333" stroke-width=".95"/></svg>
<div class="t td" style="left:1515px;top:794.5px;">区域</div>
<div class="a del" style="left:1648px;top:788.5px;width:75px;height:31px;"></div>
<svg class="a" style="left:1662.4px;top:798.5px;" width="13" height="13" viewBox="0 0 13 13"><path d="M0.6 2.6 H12.4 M4.2 2.4 V0.9 H8.8 V2.4" fill="none" stroke="#e25858" stroke-width="1.2"/><path d="M2 4.2 V10.8 C2 11.8 2.6 12.4 3.6 12.4 H9.4 C10.4 12.4 11 11.8 11 10.8 V4.2" fill="none" stroke="#e25858" stroke-width="1.2"/><path d="M4.8 5.4 V10.2 M6.5 5.4 V10.2 M8.2 5.4 V10.2" stroke="#e25858" stroke-width=".9"/></svg>
<div class="t " style="left:1680.5px;top:794px;color:#e25858;font-size:14.4px">删除</div>
<div class="t lnk" style="left:1740px;top:794px;">详情</div>
<div class="a hl" style="left:312px;top:896px;width:1491px;height:1px;"></div>
<div class="a hl" style="left:253px;top:897px;width:58px;height:1px;"></div>
<div class="a cb" style="left:271px;top:858px;width:22px;height:21px;height:21px"></div>
<div class="t td" style="left:330px;top:849.7px;">探矿钻机</div>
<div class="t code" style="left:330px;top:865.5px;">BJ0RTMZJ323K</div>
<div class="t td" style="left:477px;top:855.5px;color:#dc1f1f;font-weight:400">异常</div>
<div class="t td" style="left:581px;top:855.5px;letter-spacing:.45px">2024-02-22 16:14:...</div>
<div class="t td" style="left:784px;top:855.5px;">陕西省西...</div>
<div class="t td" style="left:905px;top:855.5px;">张兴鑫</div>
<div class="t td" style="left:1026px;top:855.5px;">生成制造类</div>
<div class="t td" style="left:1173px;top:855.5px;">1896...</div>
<div class="t td" style="left:1266px;top:854.5px;">-</div>
<svg class="a" style="left:1410px;top:852px;" width="31" height="31" viewBox="0 0 31 31"><path d="M0 9 L31 3 M0 21 L31 14 M4 0 L28 31" fill="none" stroke="#efefef" stroke-width=".7"/><path d="M16.7 6.9 C13 12 8 19 7.9 23.6 C8 27 12 27.2 16 26 C20 25 24.5 22.5 24 19.7 C22 15 12 11 5.9 8.9" fill="none" stroke="#333" stroke-width=".95"/></svg>
<div class="t td" style="left:1515px;top:855.5px;">设备</div>
<div class="a del" style="left:1648px;top:849.5px;width:75px;height:31px;"></div>
<svg class="a" style="left:1662.4px;top:859.5px;" width="13" height="13" viewBox="0 0 13 13"><path d="M0.6 2.6 H12.4 M4.2 2.4 V0.9 H8.8 V2.4" fill="none" stroke="#e25858" stroke-width="1.2"/><path d="M2 4.2 V10.8 C2 11.8 2.6 12.4 3.6 12.4 H9.4 C10.4 12.4 11 11.8 11 10.8 V4.2" fill="none" stroke="#e25858" stroke-width="1.2"/><path d="M4.8 5.4 V10.2 M6.5 5.4 V10.2 M8.2 5.4 V10.2" stroke="#e25858" stroke-width=".9"/></svg>
<div class="t " style="left:1680.5px;top:855px;color:#e25858;font-size:14.4px">删除</div>
<div class="t lnk" style="left:1740px;top:855px;">详情</div>
<div class="a " style="left:1894px;top:71px;width:3px;height:793px;background:#f0f0f0"></div>
<div class="a " style="left:1894px;top:97px;width:3px;height:560px;background:#c1c1c1"></div>
</body></html>
